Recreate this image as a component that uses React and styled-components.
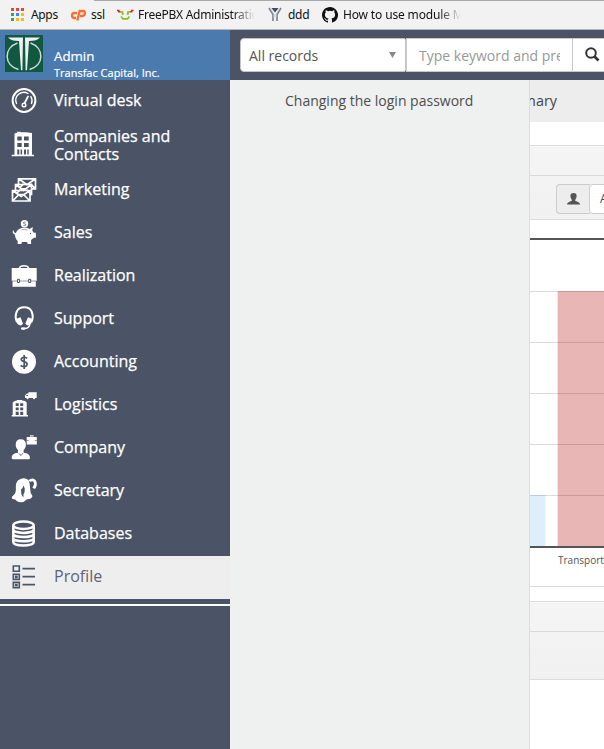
import React from 'react';
import styled, { createGlobalStyle } from 'styled-components';

const slate = '#4b5466';

const GlobalStyle = createGlobalStyle`
  * { box-sizing: border-box; }
  body { margin: 0; overflow: hidden; background: #fff; font-family: "Open Sans", "Noto Sans", sans-serif; }
  svg { display: block; flex: none; }
`;

const Page = styled.div`
  width: 604px;
  height: 749px;
  display: flex;
  flex-direction: column;
  overflow: hidden;
`;

const BookmarkBar = styled.nav`
  height: 30px;
  flex: none;
  display: flex;
  align-items: center;
  padding-left: 10px;
  background: linear-gradient(90deg, #f1f1f1 94px, #a8a8a8 94px) top / 100% 1px no-repeat, #f2f2f2;
  border-bottom: 1px solid #b6b6b6;
`;

const Bookmark = styled.a`
  display: flex;
  align-items: center;
  flex: none;
  width: ${(p) => p.$width}px;
  gap: ${(p) => p.$gap}px;
  color: #111;
`;

const BookmarkLabel = styled.span`
  flex: none;
  width: ${(p) => p.$width}px;
  overflow: hidden;
  white-space: nowrap;
  font-family: "Noto Sans", sans-serif;
  font-size: 12px;
  line-height: 18px;
  letter-spacing: ${(p) => p.$spacing || 0}px;
  mask-image: ${(p) => (p.$fade ? 'linear-gradient(90deg, #000 calc(100% - 22px), transparent)' : 'none')};
`;

const Main = styled.div`
  flex: 1;
  min-height: 0;
  display: flex;
`;

const Sidebar = styled.aside`
  width: 230px;
  flex: none;
  background: ${slate};
`;

const Account = styled.header`
  height: 50px;
  display: flex;
  background: #4a7aae;
  padding: 5px 0 0 5px;
  gap: 11px;
  color: #fff;
`;

const AccountText = styled.div`
  padding-top: 12px;
  white-space: nowrap;
  -webkit-text-stroke: 0.2px #fff;
`;

const UserName = styled.div`
  font-size: 13.3px;
  line-height: 18px;
`;

const CompanyName = styled.div`
  font-size: 11px;
  line-height: 16px;
`;

const Menu = styled.ul`
  margin: 0;
  padding: 0 0 5px;
  list-style: none;
  border-bottom: 2px solid #fff;
`;

const MenuItem = styled.li`
  height: ${(p) => p.$height || 43}px;
  display: flex;
  align-items: center;
  gap: 17px;
  padding-left: 11px;
  background: ${(p) => (p.$active ? '#eeeeee' : 'transparent')};
  color: ${(p) => (p.$active ? '#5e6473' : '#fff')};
`;

const MenuIcon = styled.svg`
  width: 26px;
  height: 26px;
  margin-bottom: 3px;
  overflow: visible;
`;

const MenuLabel = styled.span`
  width: 140px;
  padding-bottom: 3px;
  font-size: 16px;
  line-height: 18px;
  -webkit-text-stroke: ${(p) => (p.$active ? '0' : '0.25px #fff')};
`;

const Workspace = styled.div`
  flex: 1;
  min-width: 0;
  display: flex;
  flex-direction: column;
`;

const SearchBar = styled.header`
  height: 50px;
  flex: none;
  display: flex;
  padding: 8px 0 8px 10px;
  background: ${slate};
`;

const ScopeSelect = styled.div`
  width: 166px;
  flex: none;
  display: flex;
  align-items: center;
  justify-content: space-between;
  padding: 0 9px 0 8px;
  border: 1px solid #c4c4c4;
  border-radius: 4px 2px 2px 4px;
  background: #fff;
  color: #555;
  font-size: 14px;
`;

const SearchField = styled.div`
  width: 167px;
  flex: none;
  padding: 0 12px;
  border: 1px solid #c8c8c8;
  background: #fff;
`;

const Placeholder = styled.div`
  overflow: hidden;
  white-space: nowrap;
  color: #999;
  font-size: 14px;
  line-height: 34px;
  height: 32px;
`;

const SearchButton = styled.div`
  width: 42px;
  flex: none;
  padding: 8px 0 0 12px;
  margin-left: -1px;
  border: 1px solid #c8c8c8;
  background: #fff;
`;

const Panels = styled.div`
  flex: 1;
  min-height: 0;
  display: flex;
`;

const Submenu = styled.section`
  width: 300px;
  flex: none;
  padding: 11px 0 0 55px;
  background: #eff1f0;
  border-right: 1px solid #dcdddd;
`;

const SubmenuLink = styled.a`
  display: block;
  font-size: 14px;
  line-height: 20px;
  white-space: nowrap;
  color: #4d4d4d;
`;

const Dashboard = styled.main`
  flex: 1;
  min-width: 0;
  overflow: hidden;
  background: #fff;
`;

const TabStrip = styled.div`
  height: 42px;
  display: flex;
  justify-content: flex-end;
  padding: 11px 47px 0 0;
  background: #ededed;
  color: #444;
  font-size: 14.4px;
  line-height: 20px;
`;

const Widget = styled.section`
  margin-top: ${(p) => p.$top}px;
  border: solid #dcdcdc;
  border-width: 1px 0;
`;

const WidgetTitle = styled.div`
  height: 30px;
  background: #f4f4f4;
  border-top: 1px solid #fafafa;
  border-bottom: 1px solid #d9d9d9;
`;

const WidgetTools = styled.div`
  height: ${(p) => p.$height}px;
  display: flex;
  padding: 8px 0 0 26px;
  background: linear-gradient(#f3f3f3, #f1f1f1);
  border-bottom: ${(p) => (p.$line ? '1px solid #dcdcdc' : '0')};
`;

const UserAddon = styled.span`
  width: 34px;
  height: 30px;
  flex: none;
  padding: 8px 0 0 10px;
  border: 1px solid #ccc;
  border-right: 0;
  border-radius: 4px 0 0 4px;
  background: #ededed;
`;

const UserField = styled.span`
  width: 160px;
  height: 30px;
  flex: none;
  margin-left: -1px;
  padding-left: 10px;
  border: 1px solid #ccc;
  border-radius: 4px;
  background: #fff;
  color: #444;
  font-size: 12px;
  line-height: 28px;
`;

const AxisLabel = styled.text`
  font-family: "Open Sans", sans-serif;
  font-size: 10px;
  fill: #555;
`;

const icons = {
  desk: (
    <g fill="none" stroke="#fff" strokeLinecap="round">
      <circle cx="13" cy="13.500" r="11.400" strokeWidth="2" />
      <path d="M5.500 16.500A8 8 0 0 1 17 6.500M19.800 9.500a8 8 0 0 1 .7 7" strokeWidth="1.400" />
      <path d="M13.600 16L17 9.500" strokeWidth="1.700" />
      <circle cx="13" cy="18" r="1.800" strokeWidth="1.500" />
    </g>
  ),
  building: (
    <g>
      <path fill="#fff" d="M3.500 1.500L6 .8V-.3h3.500v.6h5.500l6 .7V22.700h2v1.600H.7v-1.600h2.800z" />
      <path fill={slate} d="M6.300 4.500h4.400v4H6.300zm6.700 0h4.700v4H13zm-6.700 6.500h4.400v4H6.300zm6.700 0h4.700v4H13zM6.300 17.500h2v5h-2zm3.300 0h1.500v5H9.600zm3.400 0h2v5h-2zm3.300 0h1.400v5h-1.400z" />
    </g>
  ),
  mail: (
    <g fill={slate} stroke="#fff" strokeWidth="1.700">
      <path d="M7.500 2.800h17v10h-17zM7.500 2.800l8.500 6 8.500-6M7.500 12.800l5-5M24.500 12.800l-5-5" />
      <path d="M4.500 8.500h16v10h-16zM4.500 8.500l8 6 8-6M4.500 18.500l5-5M20.500 18.500l-5-5" />
      <path d="M1.500 14.500H19V25H1.500zM1.500 14.500l8.700 6 8.800-6M1.500 25l6-6M19 25l-6-6" />
    </g>
  ),
  pig: (
    <g fill="#fff">
      <circle cx="13.500" cy="4.700" r="3.700" />
      <path d="M2.500 11q0 3 2.500 3c1-3.500 4.500-5.300 8.500-5.300 2.400 0 4 .5 5 1.300l3.300-2-.5 3.700 1.600 2h2v5h-2l-2.800 2.200V25h-3.400l-.6-2H11l-.7 2H6.700v-3C4.500 20 4 17.500 4 15.500 1.700 15 1 12.500 2.500 11z" />
      <path d="M14.700 3.200q-2.500-.5-2.500.6 0 .8 1.300.9 1.500.3 1.300 1.200-.3.900-2.500.5" fill="none" stroke={slate} strokeWidth=".7" />
      <circle cx="19.500" cy="14.500" r=".7" fill={slate} />
      <path d="M10.500 10.700q3.500-1 6 .3" fill="none" stroke={slate} strokeWidth=".5" />
    </g>
  ),
  case: (
    <g>
      <path d="M8.500 6.500Q8.500 3.800 13 3.800t4.500 2.700" fill="none" stroke="#fff" strokeWidth="1.600" />
      <path fill="#fff" d="M.7 6h25v13h-.9v5.800H1.500V19H.7z" />
      <path stroke={slate} strokeWidth=".6" d="M1 19h24.500" />
      <path fill="#fff" stroke={slate} d="M6.500 17.300h2v3.200h-2zm11.200 0h2v3.200h-2z" />
    </g>
  ),
  headset: (
    <g>
      <path d="M6 17C4 13 4.700 9 5.800 6.500 7.200 3 10 2.300 13.200 2.300S19.200 3 20.600 6.500C21.700 9 22.400 13 20.400 17" fill="none" stroke="#fff" strokeWidth="2" />
      <path fill="#fff" d="M6 13.500l3.500-1.300 2.500 6.500-2 1.800C6.500 20 4.300 17 6 13.500zm14.500 0L17 12.200l-2.700 6.500 2.200 1.800c3.500-.5 5.500-3.500 4-7z" />
      <path d="M18.800 19q-.3 4.300-5 4.500" fill="none" stroke="#fff" strokeWidth="1.500" />
      <ellipse cx="12.300" cy="23.600" rx="2.500" ry="1.400" fill="#fff" />
    </g>
  ),
  money: (
    <g>
      <circle cx="13" cy="13.800" r="12" fill="#fff" />
      <path d="M16.200 10.200Q12.800 8.300 10.900 10.200T12.300 13.400q4.700 1.200 3.700 3.400T13 18.700t-3.500-1.200M13.200 7v14" fill="none" stroke={slate} strokeWidth="1.700" />
    </g>
  ),
  logistics: (
    <g>
      <path fill="#fff" d="M1.700 11.500l2-1.500 2.300-.5V9h5v.5l3 .5 1.700 1.500V24H17v1.400H.7V24h1zM17.500 1.300h8.200v5.800H14V4.500l2-2h1.500z" />
      <path fill={slate} d="M4.700 12.300h3V15h-3zm4.500 0h3V15h-3zm-4.500 4.300h3v2.700h-3zm4.500 0h3v2.700h-3zM4.700 20.800h3V24h-3zm4.500 0h3V24h-3zM15.500 4h1.500v1h-1.800z" />
      <circle cx="16.500" cy="7.300" r="1" fill="#fff" />
      <circle cx="23" cy="7.300" r="1" fill="#fff" />
    </g>
  ),
  person: (
    <g>
      <path fill="#fff" d="M9.800 5.300c3.400 0 5.100 1.900 5.100 5.300 0 2.500-.9 4.300-2.300 5.500v2.600c4.500.5 6.400 2 6.400 5.500l-.8 1H1.500l-.8-1c0-3.500 1.900-5 6.300-5.500v-2.600c-1.400-1.200-2.300-3-2.300-5.500 0-3.400 1.700-5.300 5.100-5.300zM15.700 3H19V1.300h3.500V3h3.300v7.500H15.700z" />
      <path d="M19.800 3v-.8h2V3M15.700 6.500h2m6 0h2M7.700 19l1.500 2.300M12 19l-1.500 2.300M9.800 20v2" stroke={slate} strokeWidth=".6" fill="none" />
    </g>
  ),
  secretary: (
    <g>
      <path fill="#fff" d="M7.500 3Q13-.5 17.500 3q1.800 4 1.700 9-.2 4 2.300 7-1 3.300-5.500 3.200-4.500 4.800-10 2l-1.700-1.700Q.5 22.500.8 20l2.200-2.300Q5.300 16 4.800 10 4.800 5 7.500 3z" />
      <path fill={slate} d="M10 12.500q2-1.200 2.400-4l1.400 3q.3 4-1.400 6l.2 2.800q-1.700-.8-2.200-3z" />
      <path d="M18.300 4q3.500-2.500 5.500.3 1.500 3-.3 6l-1.500-.8" fill="none" stroke="#fff" strokeWidth="2.700" />
    </g>
  ),
  database: (
    <g fill="none" stroke="#fff" strokeWidth="2.500">
      <ellipse cx="12.500" cy="5.300" rx="10.200" ry="3.700" />
      <path d="M2.300 5.500V22c0 4.700 20.400 4.700 20.400 0V5.500M2.300 9.500c0 4.500 20.400 4.500 20.400 0M2.300 13.700c0 4.500 20.400 4.500 20.400 0M2.300 17.900c0 4.500 20.400 4.500 20.400 0" />
    </g>
  ),
  profile: (
    <g fill="none" stroke={slate} strokeWidth="1.600">
      <path d="M2.300 3h6v5.300h-6zm0 8.200h6v5.300h-6zm0 8.200h6v5.300h-6z" />
      <path d="M4.700 13.400h1.200v1.200H4.700zm0 8.200h1.200v1.200H4.700z" />
      <path d="M11.500 5.700H24m-12.500 8H24m-12.500 8H24" strokeWidth="1.700" />
    </g>
  ),
};

const menu = [
  { icon: 'desk', label: 'Virtual desk', height: 43 },
  { icon: 'building', label: 'Companies and Contacts', height: 46 },
  { icon: 'mail', label: 'Marketing' },
  { icon: 'pig', label: 'Sales' },
  { icon: 'case', label: 'Realization' },
  { icon: 'headset', label: 'Support' },
  { icon: 'money', label: 'Accounting' },
  { icon: 'logistics', label: 'Logistics' },
  { icon: 'person', label: 'Company' },
  { icon: 'secretary', label: 'Secretary' },
  { icon: 'database', label: 'Databases' },
  { icon: 'profile', label: 'Profile', active: true },
];

const appColors = ['#ea4335', '#ea4335', '#ea4335', '#34a853', '#4285f4', '#fbbc05', '#34a853', '#fbbc05', '#fbbc05'];

function AppsIcon() {
  return (
    <svg width="14" height="14">
      {appColors.map((c, i) => (
        <rect key={i} x={1 + (i % 3) * 5} y={Math.floor(i / 3) * 5} width="3" height="3" fill={c} />
      ))}
    </svg>
  );
}

function CpanelIcon() {
  return (
    <svg width="17" height="14" viewBox="0 0 17 14">
      <path d="M7 5H4.500a2.500 2.500 0 0 0 0 5H6M7.300 12.500L9.700 3H13c3.300 0 2.300 5-1 5H10" fill="none" stroke="#ff6c2c" strokeWidth="2.300" />
    </svg>
  );
}

function FrogIcon() {
  return (
    <svg width="17" height="13" viewBox="0 0 17 13" fill="none">
      <path d="M3.500 4h2v2h1.300M13 4h-2v2H9.700M4 8.500l2 2.300h4.500l2-2.300" stroke="#92bd22" strokeWidth="1.700" />
      <path d="M0 2.500h1.800v1.300h1.700M16.500 2.500h-1.800v1.300H13" stroke="#d62b20" strokeWidth="1.500" />
    </svg>
  );
}

function YIcon() {
  return (
    <svg width="14" height="15" viewBox="0 0 14 15">
      <path fill="#3f4860" d="M3.500 1h7L7 5.500z" />
      <path d="M1 1l4 6.500V14M13 1L9 7.500V14" fill="none" stroke="#777e8a" strokeWidth="1.600" />
      <path d="M2.500 1.500L6 7.500v3M11.500 1.500L8 7.500v3" fill="none" stroke="#c5cad1" />
    </svg>
  );
}

function GithubIcon() {
  return (
    <svg width="16" height="16" viewBox="0 0 16 16">
      <path fill="#111" d="M8 0C3.580 0 0 3.580 0 8c0 3.540 2.290 6.530 5.470 7.590.4.070.55-.17.55-.38v-1.490c-2.230.48-2.700-.94-2.700-.94-.36-.92-.89-1.170-.89-1.170-.73-.5.060-.49.060-.49.800.060 1.220.82 1.220.82.71 1.220 1.870.87 2.330.67.070-.52.280-.87.510-1.070-1.780-.2-3.640-.89-3.640-3.950 0-.87.310-1.590.820-2.150-.08-.2-.36-1.020.08-2.120 0 0 .67-.22 2.200.82a7.600 7.600 0 0 1 4 0c1.530-1.040 2.200-.82 2.200-.82.440 1.100.160 1.920.080 2.120.510.560.820 1.270.820 2.150 0 3.070-1.870 3.750-3.650 3.950.290.250.540.730.540 1.480v2.200c0 .21.150.46.550.38A8 8 0 0 0 8 0" />
    </svg>
  );
}

function CompanyLogo() {
  return (
    <svg width="38" height="37" viewBox="0 0 38 37">
      <path fill="#10583f" d="M0 0h38v37H0z" />
      <path d="M12.500 8C-1.500 13-1.500 30 13.500 34.500M25.500 8c14 5 14 22-1 26.500" fill="none" stroke="#d2ddd7" strokeWidth="1.500" />
      <path fill="#edf1ef" d="M3 2.500h15l-.6 32.800H16L14 6Q6 6 3 2.500zm32 0H20l.6 32.800H22L24 6Q32 6 35 2.500z" />
    </svg>
  );
}

function Chart() {
  return (
    <svg width="74" height="366">
      <rect x="0" y="275" width="15" height="52" fill="#dfeefb" />
      <rect x="15" y="275" width="1" height="52" fill="#f1f7fc" />
      <rect x="28" y="71" width="46" height="256" fill="#e9b6b6" />
      <rect x="27" y="71" width="1" height="256" fill="#f6e4e4" />
      <path d="M0 71.500h74M0 122.500h74M0 173.500h74M0 224.500h74M0 275.500h74" stroke="#000" strokeOpacity=".14" />
      <path d="M0 19h74M0 327h74" stroke="#555" strokeWidth="2" />
      <AxisLabel x="28" y="344">Transportation</AxisLabel>
    </svg>
  );
}

export default function App() {
  return (
    <Page>
      <GlobalStyle />
      <BookmarkBar>
        <Bookmark $width={60} $gap={7}><AppsIcon /><BookmarkLabel $width={32} $spacing={-0.35}>Apps</BookmarkLabel></Bookmark>
        <Bookmark $width={47} $gap={4}><CpanelIcon /><BookmarkLabel $width={18} $spacing={-0.3}>ssl</BookmarkLabel></Bookmark>
        <Bookmark $width={151} $gap={4}><FrogIcon /><BookmarkLabel $width={117} $spacing={-0.25} $fade>FreePBX Administration</BookmarkLabel></Bookmark>
        <Bookmark $width={54} $gap={6}><YIcon /><BookmarkLabel $width={24} $spacing={-0.3}>ddd</BookmarkLabel></Bookmark>
        <Bookmark $width={140} $gap={5}><GithubIcon /><BookmarkLabel $width={118} $spacing={-0.15} $fade>How to use module Mail</BookmarkLabel></Bookmark>
      </BookmarkBar>
      <Main>
        <Sidebar>
          <Account>
            <CompanyLogo />
            <AccountText>
              <UserName>Admin</UserName>
              <CompanyName>Transfac Capital, Inc.</CompanyName>
            </AccountText>
          </Account>
          <Menu>
            {menu.map((m) => (
              <MenuItem key={m.label} $height={m.height} $active={m.active}>
                <MenuIcon viewBox="0 0 26 26">{icons[m.icon]}</MenuIcon>
                <MenuLabel $active={m.active}>{m.label}</MenuLabel>
              </MenuItem>
            ))}
          </Menu>
        </Sidebar>
        <Workspace>
          <SearchBar>
            <ScopeSelect>
              All records
              <svg width="7" height="6"><path fill="#888" d="M0 0h7L3.500 6z" /></svg>
            </ScopeSelect>
            <SearchField><Placeholder>Type keyword and press</Placeholder></SearchField>
            <SearchButton>
              <svg width="16" height="16" viewBox="0 0 16 16" fill="none" stroke="#333">
                <circle cx="6" cy="6" r="4.800" strokeWidth="2" />
                <path d="M9.500 9.500l4 4" strokeWidth="2.600" />
              </svg>
            </SearchButton>
          </SearchBar>
          <Panels>
            <Submenu><SubmenuLink>Changing the login password</SubmenuLink></Submenu>
            <Dashboard>
              <TabStrip>Summary</TabStrip>
              <Widget $top={23}>
                <WidgetTitle />
                <WidgetTools $height={44} $line>
                  <UserAddon>
                    <svg width="13" height="12" viewBox="0 0 13 13" preserveAspectRatio="none">
                      <path fill="#555" d="M6.500 0C9 0 10 1.700 9.500 4.500L8.200 7.500v1l3.300 1.400q1.500.6 1.500 2.600H0q0-2 1.500-2.600l3.300-1.400v-1L3.500 4.500C3 1.700 4 0 6.500 0z" />
                    </svg>
                  </UserAddon>
                  <UserField>Admin</UserField>
                </WidgetTools>
                <Chart />
              </Widget>
              <Widget $top={14}>
                <WidgetTitle />
                <WidgetTools $height={47} />
              </Widget>
            </Dashboard>
          </Panels>
        </Workspace>
      </Main>
    </Page>
  );
}
